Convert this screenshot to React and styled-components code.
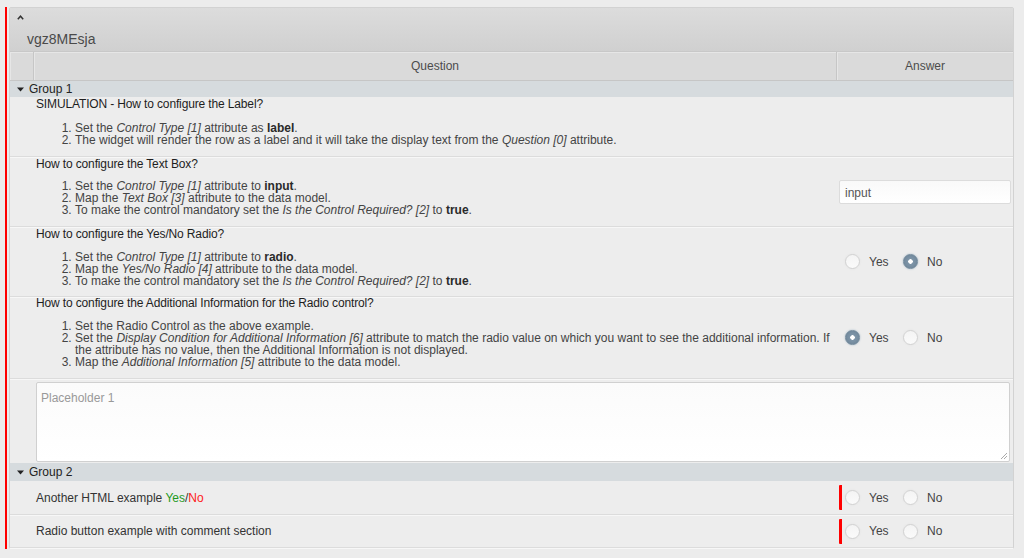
import React from "react";
import styled, { createGlobalStyle } from "styled-components";

const Global = createGlobalStyle`
  html, body { margin: 0; padding: 0; background: #ececec; }
  body { font-family: "Liberation Sans", Arial, sans-serif; color: #444; }
  * { box-sizing: border-box; }
`;

const Page = styled.div`
  width: 1024px;
  height: 558px;
  padding: 7px 10px 0 5px;
  overflow: hidden;
`;

const Marked = styled.div`
  border-left: 2px solid #ff0000;
  padding-left: 2px;
`;

const Panel = styled.div`
  background: #ededed;
  border: 1px solid #d2d2d2;
  border-radius: 2px;
  display: flex;
  flex-direction: column;
  & > * { flex-shrink: 0; }
`;

const PanelHead = styled.div`
  height: 44px;
  background: linear-gradient(#dcdcdc, #d0d0d0);
  border-bottom: 1px solid #c8c8c8;
  padding: 3px 0 0 4px;
  display: flex;
  flex-direction: column;
`;

const Caret = styled.div`
  height: 12px;
  width: 12px;
  display: flex;
  align-items: center;
  justify-content: center;
`;

const Title = styled.div`
  font-size: 14px;
  color: #4a4a4a;
  padding: 8px 0 0 13px;
`;

const HeadRow = styled.div`
  display: flex;
  height: 29px;
  background: #dadada;
  border-bottom: 1px solid #c6c6c6;
`;

const HeadCell = styled.div`
  width: ${(p) => p.$w || "auto"};
  flex: ${(p) => (p.$grow ? 1 : "none")};
  border-right: 1px solid #c6c6c6;
  box-shadow: inset 1px 1px 0 #e6e6e6;
  display: flex;
  align-items: center;
  justify-content: center;
  font-size: 12px;
  color: #4c4c4c;
  &:last-child { border-right: none; }
`;

const GroupRow = styled.div`
  height: ${(p) => p.$h}px;
  background: #d6dbde;
  display: flex;
  align-items: center;
  padding-left: 7px;
  gap: 5px;
  font-size: 12px;
  color: #222;
`;

const Row = styled.div`
  display: flex;
  height: ${(p) => p.$h}px;
  border-bottom: 1px solid #dcdcdc;
  box-shadow: 0 1px 0 #f7f7f7;
`;

const QCell = styled.div`
  flex: 1;
  padding: ${(p) => p.$pad || "1px 0 0 26px"};
  font-size: 12px;
  color: #333;
  display: flex;
  flex-direction: column;
  justify-content: ${(p) => (p.$center ? "center" : "flex-start")};
`;

const QTitle = styled.div`
  font-size: 12px;
  letter-spacing: -0.14px;
  color: #1e1e1e;
  line-height: 13px;
`;

const List = styled.ol`
  margin: ${(p) => p.$mt}px 0 0 0;
  padding-left: 39px;
  font-size: 12px;
  line-height: 12px;
  color: #444;
  i { font-style: italic; }
  b { font-weight: bold; color: #2a2a2a; }
`;

const ACell = styled.div`
  width: 176px;
  display: flex;
  align-items: center;
  padding-left: 2px;
`;

const TextInput = styled.div`
  width: 172px;
  height: 24px;
  background: linear-gradient(#f9f9f9, #ffffff);
  border: 1px solid #dcdcdc;
  border-radius: 2px;
  font-size: 12px;
  color: #555;
  padding: 5px 0 0 5px;
`;

const RadioGroup = styled.div`
  display: flex;
  align-items: center;
  border-left: 3px solid ${(p) => (p.$invalid ? "#ff0000" : "transparent")};
  border-radius: 1px;
  height: 25px;
  padding-left: 3px;
`;

const RadioOpt = styled.label`
  display: flex;
  align-items: center;
  font-size: 12px;
  color: #444;
  width: 58px;
  gap: 9px;
`;

const Circle = styled.span`
  width: 15px;
  height: 15px;
  border-radius: 50%;
  border: 1px solid ${(p) => (p.$on ? "#6f8799" : "#d2d2d2")};
  background: ${(p) =>
    p.$on
      ? "radial-gradient(circle, #ffffff 0 2px, #7e95a8 2.5px, #6b8296 100%)"
      : "linear-gradient(#f4f4f4, #fafafa)"};
  box-shadow: 0 0 2px ${(p) => (p.$on ? "#9fb4c6" : "#e0e0e0")};
`;

const Area = styled.div`
  margin: 3px 3px 1px 26px;
  height: 80px;
  background: linear-gradient(#fbfbfb, #ffffff);
  border: 1px solid #d0d0d0;
  border-radius: 2px;
  font-size: 12px;
  color: #999;
  padding: 8px 4px;
  position: relative;
`;

const Grip = styled.svg`
  position: absolute;
  right: 1px;
  bottom: 1px;
`;

const Green = styled.span` color: #1f9a1f; `;
const Red = styled.span` color: #ff1a1a; `;

const Triangle = () => (
  <svg width="7" height="5" viewBox="0 0 7 5"><path d="M0 0.5 L7 0.5 L3.5 4.5 Z" fill="#222" /></svg>
);

const Radios = ({ value, invalid }) => (
  <RadioGroup $invalid={invalid}>
    <RadioOpt><Circle $on={value === "yes"} />Yes</RadioOpt>
    <RadioOpt><Circle $on={value === "no"} />No</RadioOpt>
  </RadioGroup>
);

export default function App() {
  return (
    <Page>
      <Global />
      <Marked>
        <Panel>
          <PanelHead>
            <Caret>
              <svg width="7" height="5" viewBox="0 0 7 5"><path d="M0.8 4.2 L3.5 1.2 L6.2 4.2" stroke="#333" strokeWidth="1.5" fill="none" /></svg>
            </Caret>
            <Title>vgz8MEsja</Title>
          </PanelHead>
          <HeadRow>
            <HeadCell $w="24px" />
            <HeadCell $grow>Question</HeadCell>
            <HeadCell $w="176px">Answer</HeadCell>
          </HeadRow>
          <GroupRow $h={16}><Triangle />Group 1</GroupRow>

          <Row $h={60}>
            <QCell>
              <QTitle>SIMULATION - How to configure the Label?</QTitle>
              <List $mt={11}>
                <li>Set the <i>Control Type [1]</i> attribute as <b>label</b>.</li>
                <li>The widget will render the row as a label and it will take the display text from the <i>Question [0]</i> attribute.</li>
              </List>
            </QCell>
            <ACell />
          </Row>

          <Row $h={70}>
            <QCell>
              <QTitle>How to configure the Text Box?</QTitle>
              <List $mt={9}>
                <li>Set the <i>Control Type [1]</i> attribute to <b>input</b>.</li>
                <li>Map the <i>Text Box [3]</i> attribute to the data model.</li>
                <li>To make the control mandatory set the <i>Is the Control Required? [2]</i> to <b>true</b>.</li>
              </List>
            </QCell>
            <ACell><TextInput>input</TextInput></ACell>
          </Row>

          <Row $h={70}>
            <QCell>
              <QTitle>How to configure the Yes/No Radio?</QTitle>
              <List $mt={10}>
                <li>Set the <i>Control Type [1]</i> attribute to <b>radio</b>.</li>
                <li>Map the <i>Yes/No Radio [4]</i> attribute to the data model.</li>
                <li>To make the control mandatory set the <i>Is the Control Required? [2]</i> to <b>true</b>.</li>
              </List>
            </QCell>
            <ACell><Radios value="no" /></ACell>
          </Row>

          <Row $h={82}>
            <QCell $pad="0 0 0 26px">
              <QTitle>How to configure the Additional Information for the Radio control?</QTitle>
              <List $mt={10}>
                <li>Set the Radio Control as the above example.</li>
                <li>Set the <i>Display Condition for Additional Information [6]</i> attribute to match the radio value on which you want to see the additional information. If the attribute has no value, then the Additional Information is not displayed.</li>
                <li>Map the <i>Additional Information [5]</i> attribute to the data model.</li>
              </List>
            </QCell>
            <ACell><Radios value="yes" /></ACell>
          </Row>

          <Area>
            Placeholder 1
            <Grip width="9" height="9" viewBox="0 0 9 9">
              <path d="M8 2 L2 8 M8 5 L5 8" stroke="#aaa" strokeWidth="1" />
            </Grip>
          </Area>

          <GroupRow $h={18}><Triangle />Group 2</GroupRow>

          <Row $h={34}>
            <QCell $center $pad="0 0 0 26px">
              <div>Another HTML example <Green>Yes</Green>/<Red>No</Red></div>
            </QCell>
            <ACell><Radios invalid /></ACell>
          </Row>
          <Row $h={33}>
            <QCell $center $pad="0 0 0 26px">
              <div>Radio button example with comment section</div>
            </QCell>
            <ACell><Radios invalid /></ACell>
          </Row>
        </Panel>
      </Marked>
    </Page>
  );
}
